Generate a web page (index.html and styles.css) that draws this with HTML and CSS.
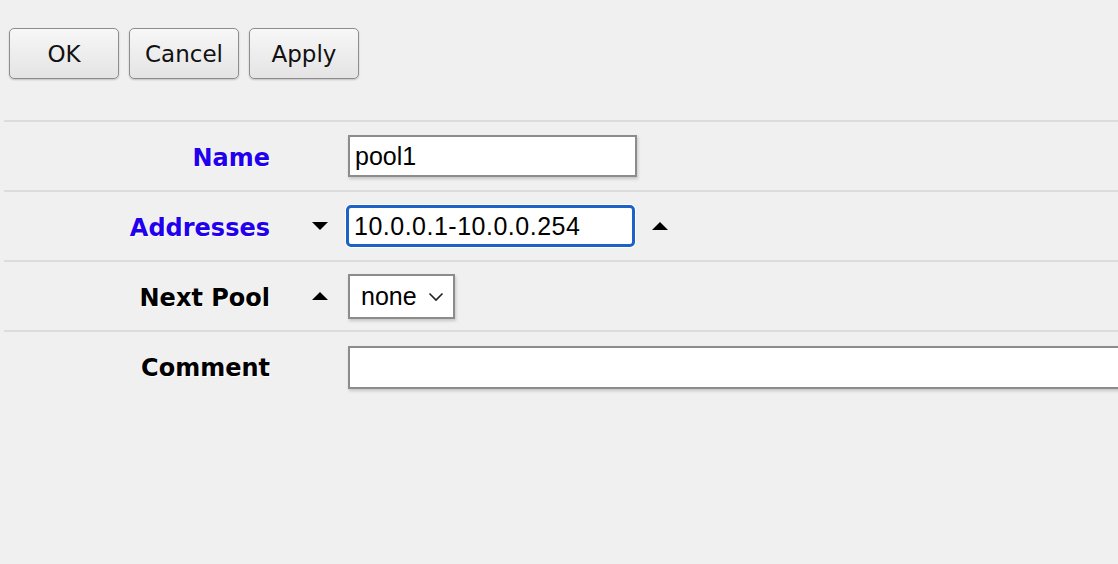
FILE: index.html
```html
<!DOCTYPE html>
<html>
<head>
<meta charset="utf-8">
<link rel="stylesheet" href="styles.css">
</head>
<body>
<div class="toolbar">
  <button class="btn">OK</button>
  <button class="btn">Cancel</button>
  <button class="btn">Apply</button>
</div>
<div class="form">
  <div class="row">
    <div class="label req">Name</div>
    <div class="ctl"></div>
    <div class="field"><div class="input w-name">pool1</div></div>
  </div>
  <div class="row">
    <div class="label req">Addresses</div>
    <div class="ctl"><span class="tri down"></span></div>
    <div class="field">
      <div class="input w-name focus">10.0.0.1-10.0.0.254</div>
      <span class="tri up after"></span>
    </div>
  </div>
  <div class="row">
    <div class="label">Next Pool</div>
    <div class="ctl"><span class="tri up"></span></div>
    <div class="field">
      <div class="input select">none
        <svg class="chev" width="16" height="10" viewBox="0 0 16 10"><path d="M1.5 1.5 L8 8 L14.5 1.5" fill="none" stroke="#222" stroke-width="1.6"/></svg>
      </div>
    </div>
  </div>
  <div class="row">
    <div class="label">Comment</div>
    <div class="ctl"></div>
    <div class="field"><div class="input wide"></div></div>
  </div>
</div>
</body>
</html>
```
FILE: styles.css
```css
html, body {
  margin: 0;
  padding: 0;
  background: #f0f0f0;
  width: 1118px;
  height: 564px;
  overflow: hidden;
}
.toolbar {
  display: flex;
  gap: 10px;
  padding: 28px 0 0 9px;
  height: 120px;
  box-sizing: border-box;
}
.btn {
  width: 110px;
  height: 51px;
  box-sizing: border-box;
  border: 1.5px solid #8d8d8d;
  border-radius: 5px;
  background: linear-gradient(#f7f7f7, #e4e4e4);
  box-shadow: 0 1px 2px rgba(0,0,0,0.2);
  font-family: "DejaVu Sans", Verdana, sans-serif;
  font-size: 23px;
  color: #111;
  padding: 0;
}
.form {
  padding-left: 4px;
}
.row {
  display: grid;
  grid-template-columns: 266px 78px 1fr;
  align-items: center;
  height: 70px;
  box-sizing: border-box;
  border-top: 2px solid #dcdcdc;
}
.label {
  text-align: right;
  font-family: "DejaVu Sans", Verdana, sans-serif;
  font-weight: bold;
  font-size: 24px;
  color: #000;
  text-shadow: 1px 1px 0 #fff;
  padding-top: 3px;
}
.label.req {
  color: #2200ee;
}
.ctl {
  display: flex;
  justify-content: center;
  padding-left: 22px;
}
.field {
  display: flex;
  align-items: center;
  overflow: visible;
  white-space: nowrap;
}
.input {
  box-sizing: border-box;
  height: 42px;
  background: #fff;
  border: 2px solid #8c8c8c;
  box-shadow: 1px 2px 3px rgba(0,0,0,0.18);
  font-family: "Liberation Sans", Arial, sans-serif;
  font-size: 25px;
  color: #000;
  line-height: 38px;
  padding: 0 5px;
}
.w-name { width: 289px; }
.input.focus {
  margin-left: -2px;
  border: 3px solid #1d62c4;
  border-radius: 5px;
  box-shadow: 0 0 0 1px #fff;
  line-height: 36px;
  padding-left: 5px;
  letter-spacing: 0.5px;
}
.select {
  height: 45px;
  line-height: 41px;
  padding: 0 9px 0 11px;
  display: flex;
  align-items: center;
  gap: 11px;
}
.chev { margin-top: 2px; }
.wide {
  width: 800px;
  height: 43px;
  margin-top: 2px;
}
.tri {
  display: inline-block;
  width: 0;
  height: 0;
  border-left: 8px solid transparent;
  border-right: 8px solid transparent;
}
.tri.down {
  border-top: 8px solid #000;
}
.tri.up {
  border-bottom: 8px solid #000;
}
.tri.after {
  margin-left: 17px;
}
```
